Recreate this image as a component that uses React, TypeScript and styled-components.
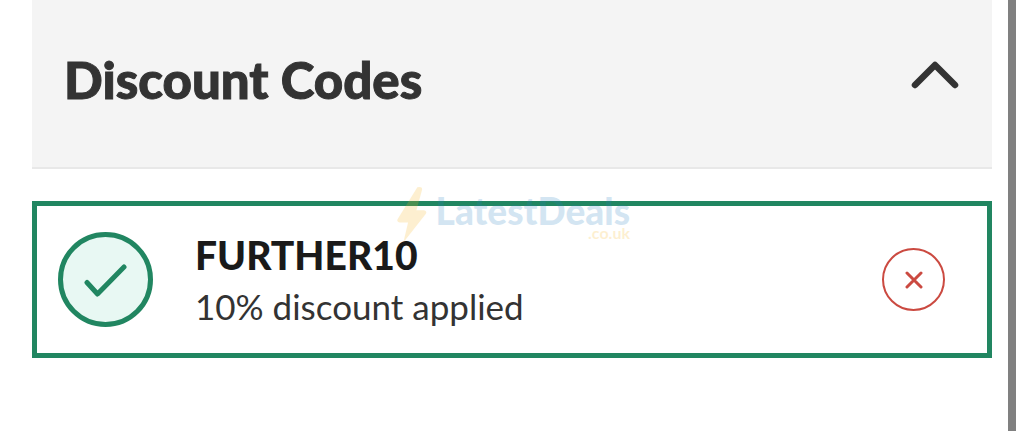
import React from "react";
import styled, { createGlobalStyle } from "styled-components";

const GlobalStyle = createGlobalStyle`
  *, *::before, *::after { box-sizing: border-box; }
  body { margin: 0; background: #fff; font-family: Lato, "Liberation Sans", sans-serif; color: #333; }
`;

const Page = styled.div`
  display: flex;
  min-height: 100vh;
  padding-right: 8px;
`;

const Content = styled.main`
  flex: 1;
  padding: 0 16px 32px 32px;
`;

const PageEdge = styled.div`
  width: 8px;
  background: #808080;
`;

const PanelHeader = styled.header`
  display: flex;
  align-items: center;
  justify-content: space-between;
  padding: 44px 32px 52px;
  background: #f4f4f4;
  border-bottom: 2px solid #e8e8e8;
`;

const Title = styled.h1`
  margin: 0;
  font-size: 51px;
  line-height: 71px;
  font-weight: 900;
  -webkit-text-stroke: 1px currentColor;
`;

const ToggleButton = styled.button`
  display: flex;
  padding: 0 0 10px;
  border: 0;
  background: none;
  color: #333;
  cursor: pointer;
`;

const PanelBody = styled.div`
  position: relative;
  padding-top: 32px;
`;

const CodeCard = styled.section`
  display: flex;
  align-items: center;
  gap: 42px;
  padding: 21px 42px 21px 21px;
  border: 5px solid #218661;
`;

const StatusBadge = styled.span`
  display: flex;
  align-items: center;
  justify-content: center;
  width: 95px;
  height: 95px;
  border: 5px solid #218661;
  border-radius: 50%;
  background: #e8f8f3;
  color: #218661;
`;

const CodeText = styled.div`
  flex: 1;
  padding-top: 3px;
`;

const CodeName = styled.h2`
  margin: 0;
  font-size: 39px;
  line-height: 51px;
  font-weight: 900;
  color: #1a1a1a;
`;

const CodeStatus = styled.p`
  margin: 0;
  font-size: 35px;
  line-height: 51px;
`;

const RemoveButton = styled.button`
  display: flex;
  align-items: center;
  justify-content: center;
  width: 63px;
  height: 63px;
  padding: 0;
  border: 2px solid #cb4a41;
  border-radius: 50%;
  background: none;
  color: #cb4a41;
  cursor: pointer;
`;

const Watermark = styled.div`
  position: absolute;
  top: 16px;
  left: 50%;
  display: flex;
  gap: 8px;
  width: 234px;
  margin-left: -116px;
  opacity: 0.2;
  pointer-events: none;
`;

const WatermarkText = styled.div`
  display: flex;
  flex-direction: column;
  align-items: flex-end;
  padding-top: 10px;
`;

const WatermarkName = styled.span`
  font-size: 37px;
  line-height: 32px;
  font-weight: 900;
  color: #2a80c0;
`;

const WatermarkDomain = styled.span`
  font-size: 16px;
  line-height: 12px;
  font-weight: 700;
  color: #f9b51c;
`;

export default function App() {
  return (
    <Page>
      <GlobalStyle />
      <Content>
        <PanelHeader>
          <Title>Discount Codes</Title>
          <ToggleButton aria-label="Collapse discount codes" aria-expanded="true">
            <svg width="50" height="30" viewBox="0 0 50 30" fill="none" stroke="currentColor" strokeWidth="6.5" strokeLinecap="round" strokeLinejoin="round">
              <path d="M5 25 25 5l20 20" />
            </svg>
          </ToggleButton>
        </PanelHeader>
        <PanelBody>
          <CodeCard>
            <StatusBadge>
              <svg width="44" height="34" viewBox="0 0 44 34" fill="none" stroke="currentColor" strokeWidth="5" strokeLinecap="round" strokeLinejoin="round">
                <path d="M3 19.5 13.5 31 40 4" />
              </svg>
            </StatusBadge>
            <CodeText>
              <CodeName>FURTHER10</CodeName>
              <CodeStatus>10% discount applied</CodeStatus>
            </CodeText>
            <RemoveButton aria-label="Remove code FURTHER10">
              <svg width="18" height="18" viewBox="0 0 18 18" fill="none" stroke="currentColor" strokeWidth="3" strokeLinecap="round">
                <path d="M2 2 16 16M16 2 2 16" />
              </svg>
            </RemoveButton>
          </CodeCard>
          <Watermark aria-hidden="true">
            <svg width="34" height="60" viewBox="0 0 34 60" fill="#f9b51c">
              <path d="M23 0q6-1 5 3L22 25h8q4 1 2 4L10 57q-2 2-1-2l4-17H4q-4-1-2-4z" />
            </svg>
            <WatermarkText>
              <WatermarkName>LatestDeals</WatermarkName>
              <WatermarkDomain>.co.uk</WatermarkDomain>
            </WatermarkText>
          </Watermark>
        </PanelBody>
      </Content>
      <PageEdge />
    </Page>
  );
}
